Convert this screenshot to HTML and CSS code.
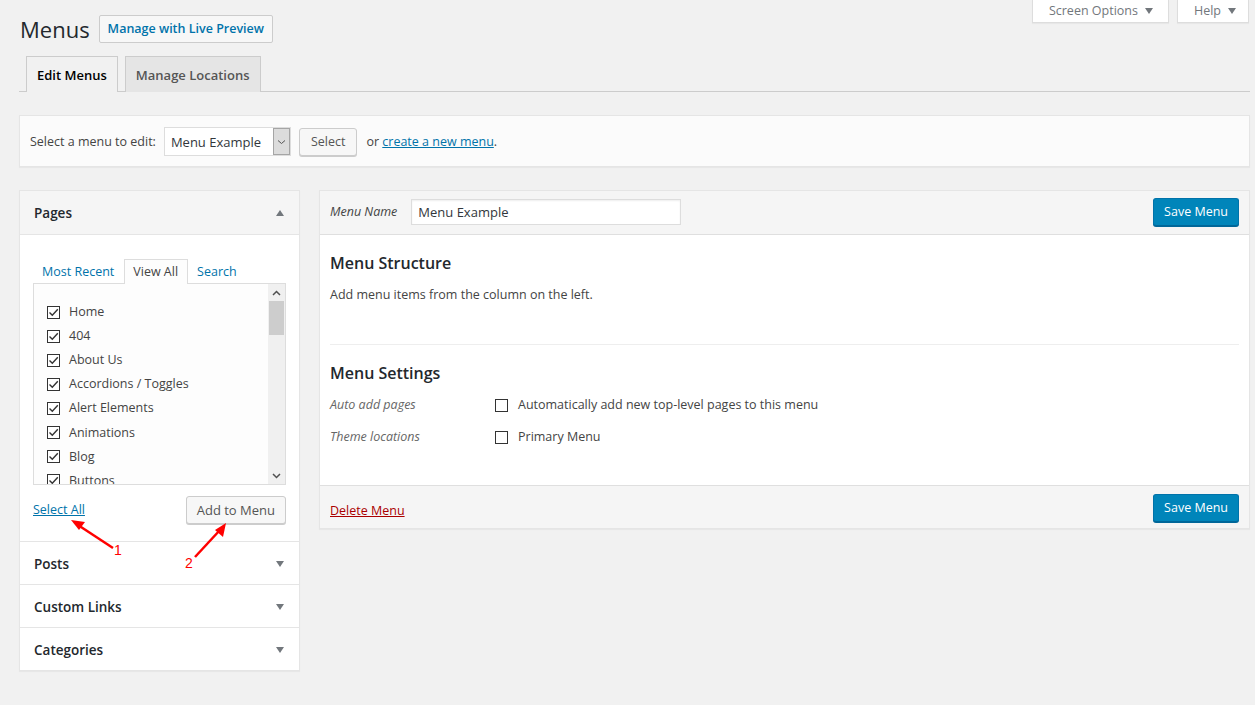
FILE: index.html
```html
<!DOCTYPE html>
<html lang="en">
<head>
<meta charset="utf-8">
<title>Menus</title>
<link rel="stylesheet" href="styles.css">
</head>
<body>
<div class="wrap">
  <div class="top">
    <div class="title-row">
      <h1 class="title">Menus</h1>
      <a class="btn btn-link">Manage with Live Preview</a>
    </div>
    <div class="screen-links">
      <span class="screen-tab">Screen Options <span class="tri-down"></span></span>
      <span class="screen-tab">Help <span class="tri-down"></span></span>
    </div>
  </div>

  <nav class="tabs">
    <a class="tab tab-active">Edit Menus</a>
    <a class="tab">Manage Locations</a>
  </nav>

  <div class="manage">
    <span class="manage-label">Select a menu to edit:</span>
    <span class="select">
      <span class="select-value">Menu Example</span>
      <span class="select-arrow"><svg width="9" height="6" viewBox="0 0 9 6"><path d="M1 1.5 L4.5 4.5 L8 1.5" fill="none" stroke="#555" stroke-width="1"/></svg></span>
    </span>
    <a class="btn btn-select">Select</a>
    <span class="manage-or">or <a class="link">create a new menu</a>.</span>
  </div>

  <div class="columns">
    <aside class="side">
      <section class="acc acc-open">
        <header class="acc-head acc-head-open">
          <span class="acc-title">Pages</span>
          <span class="tri-up"></span>
        </header>
        <div class="acc-body">
          <ul class="ptabs">
            <li class="ptab"><a class="link-plain">Most Recent</a></li>
            <li class="ptab ptab-active">View All</li>
            <li class="ptab"><a class="link-plain">Search</a></li>
          </ul>
          <div class="plist">
            <ul class="items">
              <li class="item"><span class="cb cb-on"><svg width="11" height="11" viewBox="0 0 11 11"><path d="M1.5 5.5 L4.3 8.3 L9.8 2.2" fill="none" stroke="#333" stroke-width="1.4"/></svg></span>Home</li>
              <li class="item"><span class="cb cb-on"><svg width="11" height="11" viewBox="0 0 11 11"><path d="M1.5 5.5 L4.3 8.3 L9.8 2.2" fill="none" stroke="#333" stroke-width="1.4"/></svg></span>404</li>
              <li class="item"><span class="cb cb-on"><svg width="11" height="11" viewBox="0 0 11 11"><path d="M1.5 5.5 L4.3 8.3 L9.8 2.2" fill="none" stroke="#333" stroke-width="1.4"/></svg></span>About Us</li>
              <li class="item"><span class="cb cb-on"><svg width="11" height="11" viewBox="0 0 11 11"><path d="M1.5 5.5 L4.3 8.3 L9.8 2.2" fill="none" stroke="#333" stroke-width="1.4"/></svg></span>Accordions / Toggles</li>
              <li class="item"><span class="cb cb-on"><svg width="11" height="11" viewBox="0 0 11 11"><path d="M1.5 5.5 L4.3 8.3 L9.8 2.2" fill="none" stroke="#333" stroke-width="1.4"/></svg></span>Alert Elements</li>
              <li class="item"><span class="cb cb-on"><svg width="11" height="11" viewBox="0 0 11 11"><path d="M1.5 5.5 L4.3 8.3 L9.8 2.2" fill="none" stroke="#333" stroke-width="1.4"/></svg></span>Animations</li>
              <li class="item"><span class="cb cb-on"><svg width="11" height="11" viewBox="0 0 11 11"><path d="M1.5 5.5 L4.3 8.3 L9.8 2.2" fill="none" stroke="#333" stroke-width="1.4"/></svg></span>Blog</li>
              <li class="item"><span class="cb cb-on"><svg width="11" height="11" viewBox="0 0 11 11"><path d="M1.5 5.5 L4.3 8.3 L9.8 2.2" fill="none" stroke="#333" stroke-width="1.4"/></svg></span>Buttons</li>
            </ul>
            <div class="scrollbar">
              <span class="sb-arrow"><svg width="9" height="6" viewBox="0 0 9 6"><path d="M1 5 L4.5 1.5 L8 5" fill="none" stroke="#505050" stroke-width="1.5"/></svg></span>
              <span class="sb-track"><span class="sb-thumb"></span></span>
              <span class="sb-arrow"><svg width="9" height="6" viewBox="0 0 9 6"><path d="M1 1 L4.5 4.5 L8 1" fill="none" stroke="#505050" stroke-width="1.5"/></svg></span>
            </div>
          </div>
          <div class="pactions">
            <a class="link">Select All</a>
            <a class="btn btn-add">Add to Menu</a>
          </div>
        </div>
      </section>
      <section class="acc">
        <header class="acc-head"><span class="acc-title">Posts</span><span class="tri-down tri-acc"></span></header>
      </section>
      <section class="acc">
        <header class="acc-head"><span class="acc-title">Custom Links</span><span class="tri-down tri-acc"></span></header>
      </section>
      <section class="acc">
        <header class="acc-head"><span class="acc-title">Categories</span><span class="tri-down tri-acc"></span></header>
      </section>
    </aside>

    <main class="main">
      <header class="main-head">
        <span class="name-label">Menu Name</span>
        <span class="name-input">Menu Example</span>
        <a class="btn-primary">Save Menu</a>
      </header>
      <div class="main-body">
        <div class="structure">
          <h3 class="h3">Menu Structure</h3>
          <p class="desc">Add menu items from the column on the left.</p>
        </div>
        <div class="settings">
          <h3 class="h3 h3-settings">Menu Settings</h3>
          <div class="set-row set-row-first">
            <span class="set-label">Auto add pages</span>
            <span class="set-field"><span class="cb"></span>Automatically add new top-level pages to this menu</span>
          </div>
          <div class="set-row">
            <span class="set-label">Theme locations</span>
            <span class="set-field"><span class="cb"></span>Primary Menu</span>
          </div>
        </div>
      </div>
      <footer class="main-foot">
        <a class="link-delete">Delete Menu</a>
        <a class="btn-primary">Save Menu</a>
      </footer>
    </main>
  </div>
</div>

<svg class="annot" width="1255" height="705" viewBox="0 0 1255 705">
  <line x1="113" y1="548" x2="78" y2="525" stroke="#f00" stroke-width="2.5"/>
  <polygon points="71,520 85,522 79,530" fill="#f00"/>
  <text x="114" y="555" class="annot-num">1</text>
  <line x1="195" y1="557" x2="220" y2="530" stroke="#f00" stroke-width="2.5"/>
  <polygon points="226,523 223,537 215,530" fill="#f00"/>
  <text x="185" y="568" class="annot-num">2</text>
</svg>
</body>
</html>
```

FILE: styles.css
```css
* { box-sizing: border-box; }

body {
  margin: 0;
  background: #f1f1f1;
  color: #444;
  font-family: "Open Sans", "Noto Sans", sans-serif;
  font-size: 12.5px;
  line-height: 20px;
  position: relative;
  min-height: 705px;
}

a { cursor: pointer; }

.wrap {
  padding: 0 5px 0 19px;
}

/* top row */
.top {
  display: flex;
  justify-content: space-between;
  align-items: flex-start;
}

.title-row {
  display: flex;
  align-items: center;
  gap: 9px;
  padding-top: 15px;
  margin-left: 1px;
}

.title {
  margin: 0;
  font-size: 22px;
  font-weight: 400;
  line-height: 28px;
  color: #23282d;
}

.btn {
  display: inline-flex;
  align-items: center;
  height: 28px;
  padding: 0 9px;
  border: 1px solid #ccc;
  border-radius: 3px;
  background: #f7f7f7;
  box-shadow: 0 1px 0 #ccc;
  color: #555;
  text-decoration: none;
  white-space: nowrap;
}

.btn-link {
  color: #0073aa;
  font-weight: 600;
  border-radius: 2px;
  box-shadow: none;
  background: #f7f7f7;
  padding: 0 8px;
}

.screen-links {
  display: flex;
  gap: 8px;
  margin-right: 1px;
}

.screen-tab {
  display: inline-flex;
  align-items: center;
  gap: 7px;
  height: 23px;
  padding: 0 15px 0 16px;
  background: #fff;
  border: 1px solid #ddd;
  border-top: none;
  box-shadow: 0 1px 1px rgba(0,0,0,.04);
  color: #72777c;
  font-size: 12.5px;
}

.screen-tab + .screen-tab { padding: 0 12px 0 16px; }

.tri-down {
  display: inline-block;
  width: 0;
  height: 0;
  border-left: 4.5px solid transparent;
  border-right: 4.5px solid transparent;
  border-top: 6px solid #72777c;
}

.tri-up {
  display: inline-block;
  width: 0;
  height: 0;
  border-left: 4.5px solid transparent;
  border-right: 4.5px solid transparent;
  border-bottom: 6px solid #72777c;
}

/* nav tabs */
.tabs {
  display: flex;
  gap: 7px;
  margin-top: 13px;
  padding-left: 7px;
  border-bottom: 1px solid #ccc;
}

.tab {
  display: block;
  padding: 6px 10px 5px;
  border: 1px solid #ccc;
  border-bottom: none;
  background: #e5e5e5;
  color: #555;
  font-size: 13px;
  font-weight: 600;
  line-height: 24px;
  margin-bottom: -1px;
}

.tab-active {
  background: #f1f1f1;
  color: #000;
}

/* manage bar */
.manage {
  display: flex;
  align-items: center;
  margin-top: 23px;
  padding: 11px 10px 10px;
  background: #fbfbfb;
  border: 1px solid #e5e5e5;
  box-shadow: 0 1px 1px rgba(0,0,0,.04);
}

.manage-label { margin-right: 8px; }

.select {
  display: inline-flex;
  height: 29px;
  width: 127px;
  border: 1px solid #ddd;
  background: #fff;
}

.select-value {
  flex: 1;
  padding: 4px 6px 0;
  color: #32373c;
  font-size: 13px;
}

.select-arrow {
  width: 17px;
  display: flex;
  align-items: center;
  justify-content: center;
  background: #dcdcdc;
  border: 1px solid #a5a5a5;
}

.btn-select {
  margin-left: 8px;
  height: 28px;
  padding: 0 11px;
}

.manage-or { margin-left: 9px; }

.link {
  color: #0073aa;
  text-decoration: underline;
}

.link-plain {
  color: #0073aa;
  text-decoration: none;
}

/* columns */
.columns {
  display: flex;
  align-items: flex-start;
  gap: 19px;
  margin-top: 23px;
}

.side {
  width: 281px;
  flex: none;
  background: #fff;
  border: 1px solid #e5e5e5;
  box-shadow: 0 1px 1px rgba(0,0,0,.04);
}

.acc + .acc { border-top: 1px solid #e5e5e5; }

.acc-head {
  display: flex;
  align-items: center;
  justify-content: space-between;
  height: 42px;
  padding: 1px 15px 0 14px;
  background: #fff;
}

.acc-head-open {
  background: #f5f5f5;
  border-bottom: 1px solid #e5e5e5;
  height: 44px;
  padding-top: 1px;
}

.acc-title {
  color: #23282d;
  font-size: 13.5px;
  font-weight: 600;
}

.acc-body {
  padding: 24px 13px 17px;
}

.ptabs {
  list-style: none;
  margin: 0 0 -1px;
  padding: 0;
  display: flex;
  position: relative;
  z-index: 1;
}

.ptab {
  padding: 2px 9px 3px 8px;
  line-height: 19px;
  border: 1px solid transparent;
  border-bottom: none;
}

.ptab-active {
  border-color: #ddd;
  background: #fdfdfd;
  color: #444;
}

.plist {
  display: flex;
  height: 202px;
  border: 1px solid #ddd;
  background: #fdfdfd;
  overflow: hidden;
}

.items {
  flex: 1;
  list-style: none;
  margin: 0;
  padding: 16px 0 0 13px;
}

.item {
  display: flex;
  align-items: center;
  height: 24.1px;
  gap: 9px;
  white-space: nowrap;
}

.cb {
  display: inline-flex;
  align-items: center;
  justify-content: center;
  width: 13px;
  height: 13px;
  border: 1px solid #333;
  background: #fff;
  flex: none;
}

.scrollbar {
  width: 17px;
  flex: none;
  display: flex;
  flex-direction: column;
  background: #f0f0f0;
}

.sb-arrow {
  height: 17px;
  display: flex;
  align-items: center;
  justify-content: center;
}

.sb-track {
  flex: 1;
  padding: 0 1px;
}

.sb-thumb {
  display: block;
  height: 34px;
  background: #cdcdcd;
}

.pactions {
  display: flex;
  align-items: center;
  justify-content: space-between;
  margin-top: 11px;
}

.btn-add {
  padding: 0 10px;
  font-size: 13px;
}

/* main */
.main {
  flex: 1;
  background: #fff;
  border: 1px solid #e5e5e5;
  box-shadow: 0 1px 1px rgba(0,0,0,.04);
}

.main-head {
  display: flex;
  align-items: center;
  padding: 6px 10px 8px;
  height: 44px;
  background: #f5f5f5;
  border-bottom: 1px solid #dfdfdf;
}

.name-label {
  font-style: italic;
  margin-right: 14px;
}

.name-input {
  display: flex;
  align-items: center;
  width: 270px;
  height: 26px;
  padding: 0 6px;
  background: #fff;
  border: 1px solid #ddd;
  box-shadow: inset 0 1px 2px rgba(0,0,0,.07);
  color: #32373c;
  font-size: 13px;
}

.btn-primary {
  margin-left: auto;
  display: inline-flex;
  align-items: center;
  height: 28px;
  padding: 0 10px;
  background: #0085ba;
  border: 1px solid #0073aa;
  border-bottom-color: #006799;
  border-radius: 3px;
  box-shadow: 0 1px 0 #006799;
  color: #fff;
  font-size: 12.5px;
  text-decoration: none;
}

.main-body {
  padding: 0 10px 38px;
}

.structure {
  padding: 16px 0 39px;
  border-bottom: 1px solid #eee;
}

.h3 {
  margin: 0;
  font-size: 16px;
  font-weight: 600;
  line-height: 24px;
  color: #23282d;
}

.desc {
  margin: 10px 0 0;
}

.h3-settings { margin-top: 16px; }

.set-row {
  display: flex;
  align-items: center;
  height: 20px;
  margin-top: 12px;
}

.set-row-first { margin-top: 10px; }

.set-label {
  width: 165px;
  font-style: italic;
  color: #666;
}

.set-field {
  display: flex;
  align-items: center;
  gap: 10px;
}

.main-foot {
  display: flex;
  align-items: center;
  padding: 8px 10px 6px;
  height: 43px;
  background: #f5f5f5;
  border-top: 1px solid #dfdfdf;
}

.link-delete {
  color: #a00;
  text-decoration: underline;
  margin-top: 5px;
}

/* annotations */
.annot {
  position: absolute;
  left: 0;
  top: 0;
  pointer-events: none;
}

.annot-num {
  fill: #f00;
  font-family: "Liberation Sans", sans-serif;
  font-size: 14px;
}
```
